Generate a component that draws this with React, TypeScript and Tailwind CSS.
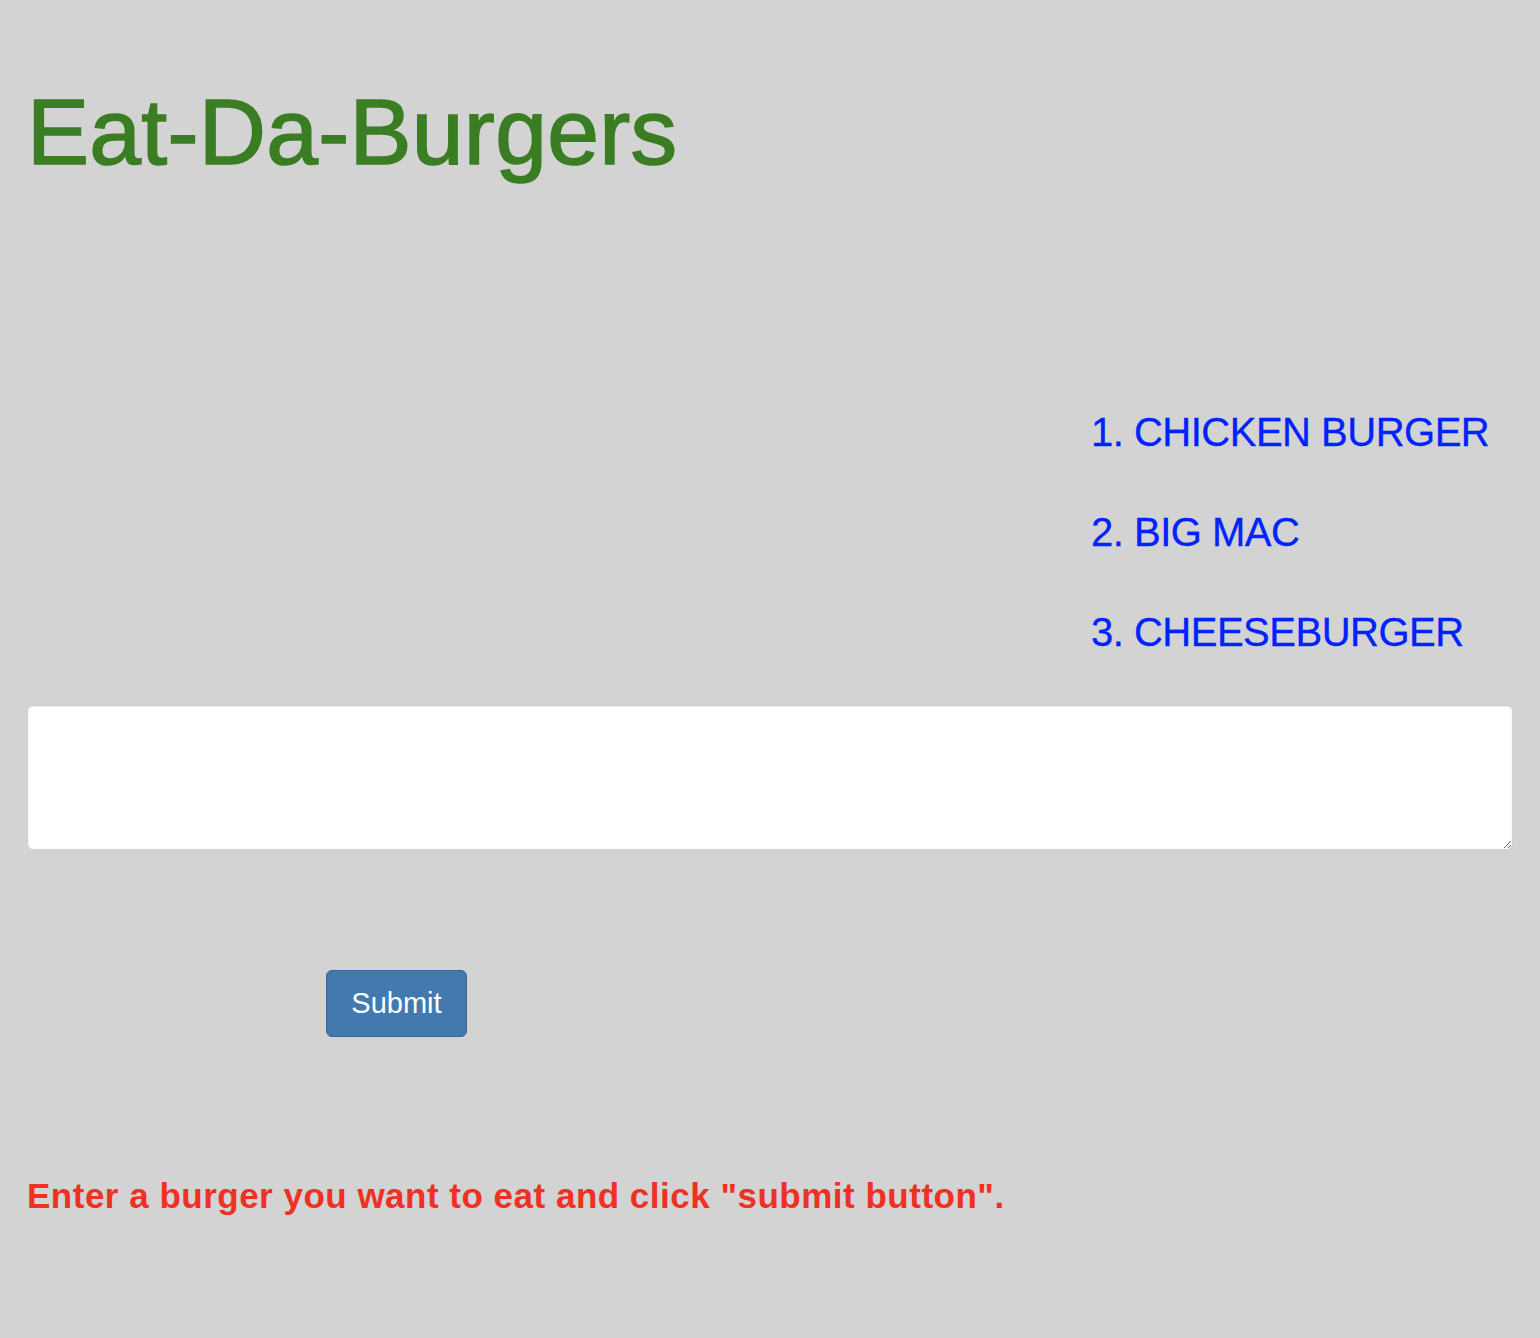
export default function App() {
  const burgers = ["CHICKEN BURGER", "BIG MAC", "CHEESEBURGER"];

  return (
    <div className="min-h-screen bg-[#d3d3d3] px-[27px] font-['Liberation_Sans',Arial,sans-serif]">
      {/* Header */}
      <h1 className="pt-[77px] text-[93px] leading-[110px] tracking-[0.3px] text-[#3a7d23] [-webkit-text-stroke:1.6px_#3a7d23]">
        Eat-Da-Burgers
      </h1>

      {/* Burger list */}
      <div className="flex justify-end pt-[225px]">
        <ol className="w-[422px] space-y-[59px] text-[40px] leading-[41px] tracking-[-0.5px] text-[#0022ff] [-webkit-text-stroke:0.3px_#0022ff]">
          {burgers.map((b, i) => (
            <li key={b}>
              {i + 1}. {b}
            </li>
          ))}
        </ol>
      </div>

      {/* Form */}
      <div className="pt-[52px]">
        <textarea className="block h-[145px] w-full rounded-[6px] border border-[#cfcfcf] bg-white shadow-[inset_0_1px_2px_rgba(0,0,0,0.08)] outline-none" />
      </div>
      <div className="pt-[120px] pl-[299px]">
        <button className="h-[67px] w-[141px] rounded-[6px] border border-[#35679a] bg-[#4479b0] text-[29px] text-white">
          Submit
        </button>
      </div>

      <p className="pt-[134px] text-[35px] font-bold leading-[50px] tracking-[0.5px] text-[#ee3124]">
        Enter a burger you want to eat and click "submit button".
      </p>
    </div>
  );
}
